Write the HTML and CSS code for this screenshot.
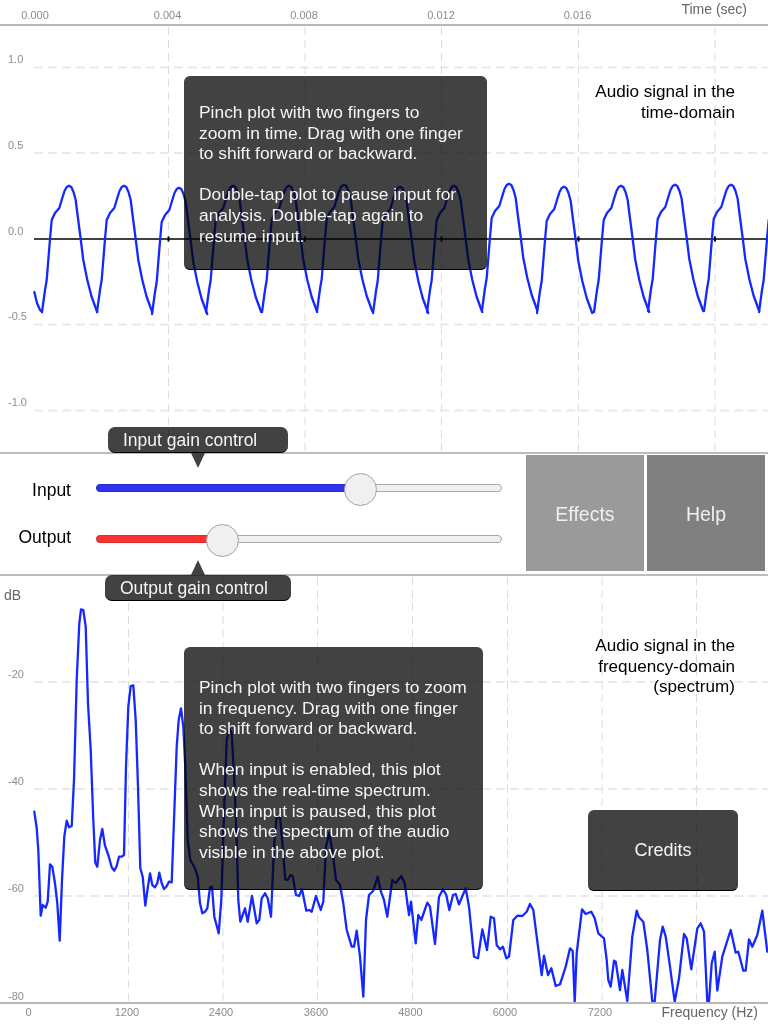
FILE: index.html
```html
<!DOCTYPE html>
<html lang="en">
<head>
    <meta charset="UTF-8">
    <meta name="viewport" content="width=device-width, initial-scale=1.0">
    <title>Audio Signal Analyzer</title>
    <link rel="stylesheet" href="styles.css">
</head>
<body>
    <!-- Top: time-domain plot -->
    <section class="plot plot-time">
        <svg class="plot-canvas" width="768" height="452" viewBox="0 0 768 452">
            <defs>
                <polyline id="cycle" points="-27,312 -24,290 -22.3,280 -19,239 -17.3,220 -14,213 -9.7,208 -6.7,198 -4.5,191 -2.3,187 0,185.7 2.3,187 4.5,192 6.7,200 8.3,213 11.7,239 14.3,260 18.3,280 22.7,297 28.2,312"/>
            </defs>
            <g class="grid-h">
                <line x1="34" y1="67.5" x2="768" y2="67.5"/>
                <line x1="34" y1="153" x2="768" y2="153"/>
                <line x1="34" y1="324.5" x2="768" y2="324.5"/>
                <line x1="34" y1="410.5" x2="768" y2="410.5"/>
            </g>
            <g class="grid-v">
                <line x1="168.5" y1="27" x2="168.5" y2="452"/>
                <line x1="305" y1="27" x2="305" y2="452"/>
                <line x1="441.5" y1="27" x2="441.5" y2="452"/>
                <line x1="578.5" y1="27" x2="578.5" y2="452"/>
                <line x1="715" y1="27" x2="715" y2="452"/>
            </g>
            <line class="axis-border" x1="0" y1="25" x2="768" y2="25"/>
            <g class="axis-zero">
                <line x1="34" y1="239" x2="768" y2="239"/>
                <line class="tick" x1="168.5" y1="236.5" x2="168.5" y2="241.5"/>
                <line class="tick" x1="305" y1="236.5" x2="305" y2="241.5"/>
                <line class="tick" x1="441.5" y1="236.5" x2="441.5" y2="241.5"/>
                <line class="tick" x1="578.5" y1="236.5" x2="578.5" y2="241.5"/>
                <line class="tick" x1="715" y1="236.5" x2="715" y2="241.5"/>
            </g>
            <g class="signal">
                <polyline points="34.3,292 37,303 40,310 42,312"/>
                <use href="#cycle" x="69"/>
                <use href="#cycle" x="124"/>
                <use href="#cycle" x="179" y="2"/>
                <use href="#cycle" x="233"/>
                <use href="#cycle" x="289"/>
                <use href="#cycle" x="344" y="-1"/>
                <use href="#cycle" x="400" y="1"/>
                <use href="#cycle" x="454"/>
                <use href="#cycle" x="509" y="-2"/>
                <use href="#cycle" x="564" y="1"/>
                <use href="#cycle" x="621"/>
                <use href="#cycle" x="675" y="-1"/>
                <use href="#cycle" x="731" y="-1"/>
                <use href="#cycle" x="786"/>
            </g>
            <g class="tick-label">
                <text x="35" y="19" text-anchor="middle">0.000</text>
                <text x="167.5" y="19" text-anchor="middle">0.004</text>
                <text x="304" y="19" text-anchor="middle">0.008</text>
                <text x="441" y="19" text-anchor="middle">0.012</text>
                <text x="577.5" y="19" text-anchor="middle">0.016</text>
                <text x="8" y="63">1.0</text>
                <text x="8" y="149">0.5</text>
                <text x="8" y="235">0.0</text>
                <text x="8" y="320">-0.5</text>
                <text x="8" y="406">-1.0</text>
            </g>
            <text class="axis-title" x="747" y="14" text-anchor="end">Time (sec)</text>
        </svg>

        <div class="plot-title plot-title-time">Audio signal in the<br>time-domain</div>

        <div class="note note-time">
            <p>Pinch plot with two fingers to<br>zoom in time. Drag with one finger<br>to shift forward or backward.</p>
            <p>Double-tap plot to pause input for<br>analysis. Double-tap again to<br>resume input.</p>
        </div>
    </section>

    <!-- Middle: gain sliders and buttons -->
    <section class="controls">
        <div class="sliders">
            <div class="slider-row">
                <span class="slider-label slider-label-input">Input</span>
                <div class="track">
                    <div class="track-fill fill-input" style="width: 65%"></div>
                    <div class="thumb" style="left: 65%"></div>
                </div>
            </div>
            <div class="slider-row">
                <span class="slider-label slider-label-output">Output</span>
                <div class="track">
                    <div class="track-fill fill-output" style="width: 31%"></div>
                    <div class="thumb" style="left: 31%"></div>
                </div>
            </div>
        </div>
        <button class="tile tile-effects">Effects</button>
        <button class="tile tile-help">Help</button>

        <div class="hint hint-input"><span>Input gain control</span></div>
    </section>

    <!-- Bottom: spectrum plot -->
    <section class="plot plot-freq">
        <svg class="plot-canvas" width="768" height="448" viewBox="0 576 768 448">
            <g class="grid-h">
                <line x1="34" y1="682" x2="768" y2="682"/>
                <line x1="34" y1="789" x2="768" y2="789"/>
                <line x1="34" y1="896" x2="768" y2="896"/>
            </g>
            <g class="grid-v">
                <line x1="128.5" y1="577" x2="128.5" y2="1002"/>
                <line x1="223" y1="577" x2="223" y2="1002"/>
                <line x1="317.5" y1="577" x2="317.5" y2="1002"/>
                <line x1="412.5" y1="577" x2="412.5" y2="1002"/>
                <line x1="507.5" y1="577" x2="507.5" y2="1002"/>
                <line x1="602" y1="577" x2="602" y2="1002"/>
                <line x1="696.5" y1="577" x2="696.5" y2="1002"/>
            </g>
            <g class="signal">
                <polyline points="34.3,811.7 36.7,828 38.3,850 40.7,915.7 42.7,905 45.7,907.7 47.7,901.7 50,864.3 52.3,866.7 55,883.3 57.3,903.3 59.7,940.7 62,880 64.3,836.7 66.7,820.7 69,827.3 71.7,826 74,780 76.7,680 79.3,623.3 81,609.3 83.3,610 85.7,626.7 88,703.3 90.7,750 93.3,820 95.3,862.7 97.3,866.7 100,840 102.3,829 105,845.7 108.3,855 111.7,867.3 114.3,870.7 116.7,866 119,856.7 121.7,856.7 124,855 126,766.7 128.3,706.7 130.7,686 133.3,685.3 135.7,720 138,786.7 140.3,868.3 142.7,876.7 145.3,905.7 147.7,888.3 150,873.3 152.3,885 155,887.3 157.3,883.3 159.3,872.7 161.7,883.3 164,889 166.3,886.7 169,881.7 171.7,882.3 174,820 176.7,746.7 178.7,720 181,708.3 183.3,726.7 185.3,766.7 187.7,840 190.3,860 195,868.3 197.7,876.7 200,903.3 202.3,913.3 205,911.7 207.3,908.3 210,887.3 212,886.7 214.3,916.7 218.7,933.3 221.3,900 224,813.3 226.7,740 229.3,728.3 231.7,733.3 234.3,780 236.7,840 238.3,900 240.3,921.7 242.7,915 245,908.3 247.7,921.7 252,896 256.7,923.3 259.3,920 261.7,898.3 265,893.3 267.7,898.3 271,916.7 274,846.7 276.7,816.7 280,816 282.7,846.7 285.3,879.3 287.7,880 290.7,875 292.7,876 296,895 299,896 302,889.3 306.3,910.7 309.3,910 311.7,911.7 316,896 320.7,910 323.3,901.7 326,846.7 329.3,832.7 332.7,853.3 336,880 340,885 343.3,903.3 346.7,930 351.7,946.7 354,946.7 356.7,930.7 360,956.7 363.3,996.7 366,920 369,895 373.3,890.7 377.7,876.7 381,891.7 384,900 387.3,916.7 392.3,880 395.7,883 401.3,876 404.7,883.3 409,915 411,901.7 415.7,943.3 418.3,915 421.3,920 427.3,902.7 430,906.7 435,944 439,896.7 443,889.3 446.3,895 449.3,910 453,895 455.7,894 459,904.3 465.7,888.3 469,906.7 474,956.7 478,958.3 482.3,929.3 487,950 490.7,916.7 494,918.3 496.7,945 500,949.3 503,946.7 506.3,958.3 509,956.7 513.3,920 517.3,915.7 522.3,916 526.7,911.7 530,904 533.3,910 538,946.7 541.7,975 544,955.7 548,975 551.3,968.3 555.7,986 560,984.3 565.7,966.7 570,948.3 572.7,951 574.7,1001.7 576.7,953 582,909.3 585.7,914 591.3,911.7 594.7,918.3 598.3,933.3 604,938.3 606.7,960 608.3,980 610.7,986.7 614,960.7 615.7,961.7 620,990 622.3,970 627.3,1001 632.3,936.7 636.7,910.7 639,917.3 643.3,921.7 647.3,950 652.3,1001.7 654.7,1001.7 660,940 662.7,926.7 665.7,936.7 670,966.7 674.7,1001.7 679,978.3 684,934 686.7,938.3 691.3,969.3 697.3,928.3 700.7,923.3 704,931.7 707.3,1001.7 709,1001.7 711.7,963.3 714.7,951.7 717.3,990.7 722.3,956.7 730.7,930 735.7,952.7 738.3,951.7 743.3,970.7 745.7,970.7 749,939.3 752.3,946.7 757.3,935 762.3,910.7 767.3,951.7"/>
            </g>
            <line class="axis-border" x1="0" y1="1003" x2="768" y2="1003"/>
            <g class="tick-label">
                <text x="8" y="678">-20</text>
                <text x="8" y="785">-40</text>
                <text x="8" y="892">-60</text>
                <text x="8" y="1000">-80</text>
                <text x="28.5" y="1016" text-anchor="middle">0</text>
                <text x="127" y="1016" text-anchor="middle">1200</text>
                <text x="221" y="1016" text-anchor="middle">2400</text>
                <text x="316" y="1016" text-anchor="middle">3600</text>
                <text x="410.5" y="1016" text-anchor="middle">4800</text>
                <text x="505" y="1016" text-anchor="middle">6000</text>
                <text x="600" y="1016" text-anchor="middle">7200</text>
            </g>
            <text class="axis-title" x="4" y="600">dB</text>
            <text class="axis-title" x="758" y="1017" text-anchor="end">Frequency (Hz)</text>
        </svg>

        <div class="hint hint-output"><span>Output gain control</span></div>

        <div class="plot-title plot-title-freq">Audio signal in the<br>frequency-domain<br>(spectrum)</div>

        <div class="note note-freq">
            <p>Pinch plot with two fingers to zoom<br>in frequency. Drag with one finger<br>to shift forward or backward.</p>
            <p>When input is enabled, this plot<br>shows the real-time spectrum.<br>When input is paused, this plot<br>shows the spectrum of the audio<br>visible in the above plot.</p>
        </div>

        <div class="note note-credits"><p>Credits</p></div>
    </section>
</body>
</html>
```

FILE: styles.css
```css
* {
    box-sizing: border-box;
}

body {
    margin: 0;
    background: #fff;
    font-family: "Liberation Sans", Arial, sans-serif;
    color: #000;
}

.plot {
    position: relative;
}

.plot-time {
    height: 454px;
    border-bottom: 2px solid #bcbcbc;
}

.plot-freq {
    height: 448px;
}

.plot-canvas {
    display: block;
}

/* Plot contents */
.grid-h line {
    stroke: #e9e9e9;
    stroke-width: 2;
    stroke-dasharray: 9 5;
}

.grid-v line {
    stroke: #dcdcdc;
    stroke-width: 1;
    stroke-dasharray: 8 5;
}

.axis-border {
    stroke: #b8b8b8;
    stroke-width: 2;
}

.axis-zero line {
    stroke: #000;
    stroke-width: 1.6;
}

.axis-zero .tick {
    stroke-width: 2;
}

.signal polyline,
#cycle {
    fill: none;
    stroke: #1428ff;
    stroke-width: 2.3;
    stroke-linejoin: round;
    stroke-linecap: round;
}

.tick-label text {
    font-size: 11px;
    fill: #8c8c8c;
}

.axis-title {
    font-size: 14px;
    fill: #666;
}

.plot-title {
    position: absolute;
    right: 33px;
    font-size: 17.1px;
    line-height: 20.7px;
    text-align: right;
}

.plot-title-time {
    top: 82px;
}

.plot-title-freq {
    top: 60px;
}

/* Dark overlays: the ::before darkens what is under it, text stays on top */
.note,
.hint {
    position: absolute;
    color: #f4f4f4;
}

.note::before,
.hint::before {
    content: "";
    position: absolute;
    inset: 0;
    background: #424242;
    border-bottom: 1px solid #000;
    border-radius: 6px;
    mix-blend-mode: multiply;
}

.note p {
    position: relative;
    margin: 0 0 20.6px;
    font-size: 17.4px;
    line-height: 20.6px;
}

.note-time {
    left: 184px;
    top: 76px;
    width: 303px;
    height: 194px;
    padding: 26px 15px 0;
}

.note-freq {
    left: 184px;
    top: 71px;
    width: 299px;
    height: 243px;
    padding: 30px 15px 0;
}

.note-credits {
    left: 588px;
    top: 234px;
    width: 150px;
    height: 81px;
    padding-top: 30px;
    text-align: center;
}

.note-credits p {
    margin: 0;
    font-size: 18px;
}

/* Gain controls */
.controls {
    position: relative;
    display: flex;
    align-items: flex-start;
    gap: 3px;
    height: 122px;
    padding: 1px 3px 0 0;
    border-bottom: 2px solid #bcbcbc;
}

.sliders {
    display: flex;
    flex: none;
    flex-direction: column;
    gap: 1px;
    width: 523px;
    padding-top: 8px;
}

.slider-row {
    display: flex;
    align-items: center;
    height: 50px;
}

.slider-label {
    width: 71px;
    margin-right: 25px;
    font-size: 17.5px;
    text-align: right;
}

.slider-label-input {
    margin-top: 4px;
}

.slider-label-output {
    margin-bottom: 3px;
}

.track {
    position: relative;
    width: 406px;
    height: 8px;
    background: #efefef;
    border: 1px solid #a8a8a8;
    border-radius: 4px;
}

.track-fill {
    position: absolute;
    top: -1px;
    bottom: -1px;
    left: -1px;
    border-radius: 4px 0 0 4px;
}

.fill-input {
    background: #2f33f0;
    border: 1px solid #2a2ccc;
}

.fill-output {
    background: #ff3030;
    border: 1px solid #d83030;
}

.thumb {
    position: absolute;
    top: 50%;
    width: 33px;
    height: 33px;
    margin: -15.5px 0 0 -16px;
    background: #f0f0f0;
    border: 1px solid #a4a4a4;
    border-radius: 50%;
}

.tile {
    flex: none;
    width: 118px;
    height: 116px;
    padding: 2px 0 0;
    border: none;
    color: #f0f0f0;
    font-family: inherit;
    font-size: 19.5px;
}

.tile-effects {
    background: #9a9a9a;
}

.tile-help {
    background: #808080;
}

.hint {
    height: 26px;
    padding-left: 15px;
    font-size: 17.5px;
    line-height: 27px;
}

.hint::before {
    border-radius: 7px;
}

.hint span {
    position: relative;
}

.hint::after {
    content: "";
    position: absolute;
    left: 83px;
    border-left: 7px solid transparent;
    border-right: 7px solid transparent;
}

.hint-input {
    left: 108px;
    top: -27px;
    width: 180px;
}

.hint-input::after {
    top: 100%;
    border-top: 15px solid #424242;
}

.hint-output {
    left: 105px;
    top: -1px;
    width: 186px;
}

.hint-output::after {
    bottom: 100%;
    left: 86px;
    border-bottom: 15px solid #424242;
}
```
